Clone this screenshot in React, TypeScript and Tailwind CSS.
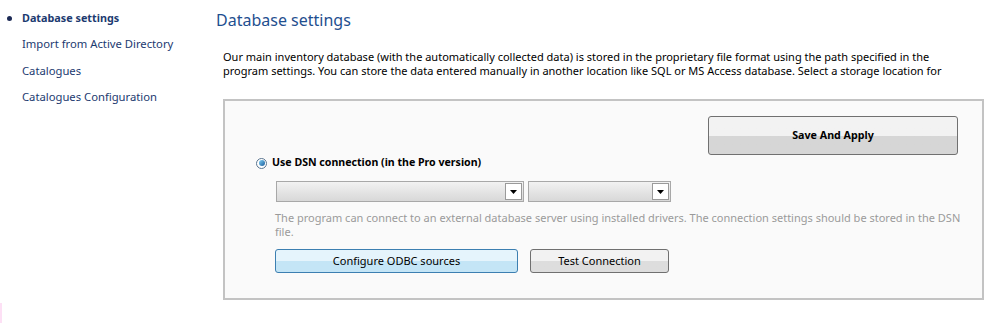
import React from 'react';

const font = { fontFamily: '"Segoe UI", "Noto Sans", sans-serif' };

function NavItem({ label, active }: { label: string; active?: boolean }) {
  return (
    <div className="relative flex h-[26.5px] items-center pl-[22px] text-[11.25px] text-[#1c3a70]">
      {active && <span className="absolute left-[7px] top-[11px] h-[5px] w-[5px] rounded-full bg-[#1c2a55]" />}
      <span className={active ? 'text-[10.8px] font-bold' : ''}>{label}</span>
    </div>
  );
}

function Combo({ width }: { width: string }) {
  return (
    <div className={`flex h-[21px] ${width} border border-[#a8a8a8] bg-gradient-to-b from-[#f2f2f2] to-[#d8d8d8] p-px`}>
      <div className="flex-1" />
      <div className="flex w-[17px] items-center justify-center border border-[#9a9a9a] bg-white">
        <svg width="7" height="4" viewBox="0 0 7 4">
          <path d="M0 0h7L3.5 4z" fill="#000" />
        </svg>
      </div>
    </div>
  );
}

export default function App() {
  return (
    <div className="relative flex h-[323px] w-[989px] bg-white text-black" style={font}>
      {/* sidebar */}
      <div className="w-[216px] shrink-0 pt-[5px]">
        <NavItem label="Database settings" active />
        <NavItem label="Import from Active Directory" />
        <NavItem label="Catalogues" />
        <NavItem label="Catalogues Configuration" />
      </div>

      {/* main */}
      <div className="flex flex-col pt-[8px]">
        <h1 className="text-[16px] leading-[24px] text-[#1f4f8f]">Database settings</h1>
        <p className="ml-[7px] mt-[18px] whitespace-nowrap text-[11px] leading-[14px]">
          Our main inventory database (with the automatically collected data) is stored in the proprietary file format using the path specified in the
          <br />
          program settings. You can store the data entered manually in another location like SQL or MS Access database. Select a storage location for
        </p>

        <div className="ml-[7px] mt-[21px] flex h-[201px] w-[761px] flex-col border-2 border-[#c3c3c3] bg-[#fafafa] pt-[15px]">
          <div className="flex justify-end pr-[24px]">
            <button className="h-[39px] w-[250px] rounded-[3px] border border-[#707070] bg-gradient-to-b from-[#f2f2f2] from-50% to-[#d6d6d6] to-50% text-[10.7px] font-bold">
              Save And Apply
            </button>
          </div>

          <div className="ml-[31px] mt-px flex h-[14px] items-center gap-[5px]">
            <span className="flex h-[11px] w-[11px] items-center justify-center rounded-full border border-[#5a7590] bg-white">
              <span className="h-[6px] w-[6px] rounded-full bg-gradient-to-br from-[#7fd0f5] to-[#1a5e9c]" />
            </span>
            <span className="text-[10.6px] font-bold">Use DSN connection (in the Pro version)</span>
          </div>

          <div className="ml-[51px] mt-[11px] flex gap-[4px]">
            <Combo width="w-[248px]" />
            <Combo width="w-[143px]" />
          </div>

          <p className="ml-[50px] mt-[9px] whitespace-nowrap text-[11px] leading-[14px] text-[#9a9a9a]">
            The program can connect to an external database server using installed drivers. The connection settings should be stored in the DSN
            <br />
            file.
          </p>

          <div className="ml-[50px] mt-[10px] flex gap-[12px]">
            <button className="h-[24px] w-[243px] rounded-[3px] border border-[#3c7fb1] bg-gradient-to-b from-[#e5f4fc] from-50% to-[#c4e5f6] to-50% text-[11px]">
              Configure ODBC sources
            </button>
            <button className="h-[24px] w-[139px] rounded-[3px] border border-[#707070] bg-gradient-to-b from-[#f2f2f2] from-50% to-[#dddddd] to-50% text-[11px]">
              Test Connection
            </button>
          </div>
        </div>
      </div>

      <div className="absolute bottom-0 left-0 h-[20px] w-[2px] bg-[#fde0f5]" />
    </div>
  );
}
